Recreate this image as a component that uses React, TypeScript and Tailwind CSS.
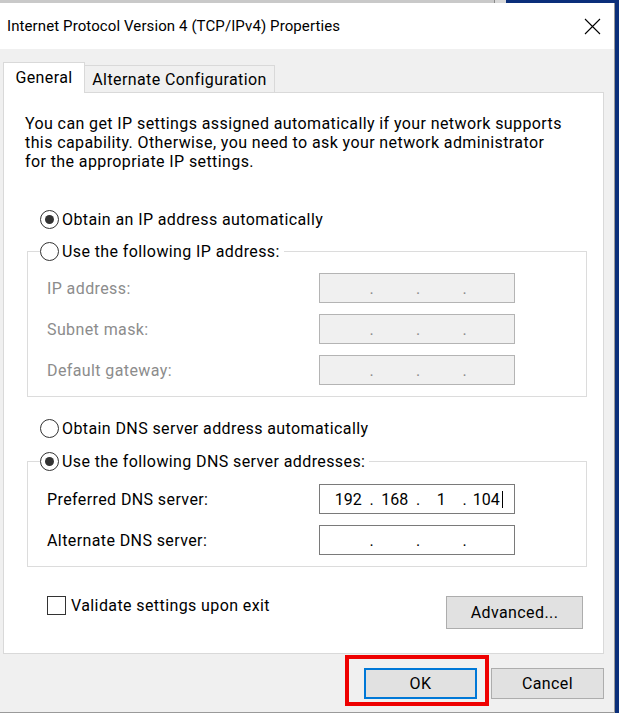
import React from 'react'

const font = "font-['Roboto',sans-serif]"

function Radio({ checked }: { checked?: boolean }) {
  return (
    <span className="flex h-[19px] w-[19px] shrink-0 items-center justify-center rounded-full border border-[#333333] bg-white">
      {checked && <span className="h-[9px] w-[9px] rounded-full bg-[#333333]" />}
    </span>
  )
}

function RadioRow({ label, checked }: { label: string; checked?: boolean }) {
  return (
    <div className="flex h-[20px] items-center gap-[3px] text-black">
      <Radio checked={checked} />
      <span className="whitespace-nowrap">{label}</span>
    </div>
  )
}

function IpField({ parts, disabled, caret }: { parts: string[]; disabled?: boolean; caret?: boolean }) {
  return (
    <div
      className={`flex h-[30px] w-[196px] items-center border pl-[8px] tracking-normal ${
        disabled ? 'border-[#b4b4b4] bg-[#f0f0f0] text-[#8c8c8c]' : 'border-[#7a7a7a] bg-white text-black'
      }`}
    >
      {parts.map((p, i) => (
        <React.Fragment key={i}>
          {i > 0 && <span className="w-[6px] text-center">.</span>}
          <span className="flex w-[40.5px] items-center justify-center">
            {p}
            {caret && i === parts.length - 1 && <span className="ml-[2px] h-[17px] w-px bg-black" />}
          </span>
        </React.Fragment>
      ))}
    </div>
  )
}

function FieldRow({ label, parts, disabled, caret }: { label: string; parts: string[]; disabled?: boolean; caret?: boolean }) {
  return (
    <div className="flex h-[30px] items-center">
      <span className={`w-[291px] pl-[19px] ${disabled ? 'text-[#8c8c8c]' : 'text-black'}`}>{label}</span>
      <IpField parts={parts} disabled={disabled} caret={caret} />
    </div>
  )
}

const empty = ['', '', '', '']

export default function App() {
  return (
    <div className={`h-[713px] w-[619px] overflow-hidden bg-[#0b2f7a] text-[16px] leading-[19px] tracking-[0.4px] ${font}`}>
      {/* strip of the window behind */}
      <div className="flex h-[3px]">
        <div className="w-[494px] bg-[#c9c9c9]" />
        <div className="w-px bg-[#8a8a8a]" />
        <div className="w-[11px] bg-[#d8d8d8]" />
        <div className="flex-1 bg-[#0b2f7a]" />
      </div>

      <div className="flex h-[710px] w-[615px] flex-col border-r border-b border-[#9a9a9a] bg-[#f0f0f0]">
        {/* title bar */}
        <div className="flex h-[46px] items-center justify-between bg-white pl-[7px] pr-[13px]">
          <span className="text-[15px] tracking-[0.1px] text-black">Internet Protocol Version 4 (TCP/IPv4) Properties</span>
          <svg width="17" height="17" viewBox="0 0 17 17">
            <path d="M1 1 L16 16 M16 1 L1 16" stroke="#000" strokeWidth="1.1" />
          </svg>
        </div>

        {/* tabs */}
        <div className="mt-[13px] flex items-end pl-[3px]">
          <div className="relative z-10 -mb-px flex h-[31px] w-[82px] items-center justify-center border border-b-0 border-[#d9d9d9] bg-white pb-[2px] text-black">
            General
          </div>
          <div className="flex h-[27px] w-[190px] items-center justify-center border border-b-0 border-l-0 border-[#d9d9d9] bg-[#f0f0f0] text-black">
            Alternate Configuration
          </div>
        </div>

        {/* panel */}
        <div className="ml-[3px] flex h-[562px] w-[601px] flex-col border border-[#d9d9d9] bg-white">
          <p className="ml-[21px] mt-[21px] whitespace-nowrap text-black">
            You can get IP settings assigned automatically if your network supports
            <br />
            this capability. Otherwise, you need to ask your network administrator
            <br />
            for the appropriate IP settings.
          </p>

          <div className="ml-[36px] mt-[38px]">
            <RadioRow label="Obtain an IP address automatically" checked />
          </div>

          <fieldset className="ml-[23px] mt-[12px] w-[560px] border border-[#dcdcdc] pb-[11px]">
            <legend className="ml-[12px] pr-[4px]">
              <RadioRow label="Use the following IP address:" />
            </legend>
            <div className="flex flex-col gap-[11px] pt-[12px]">
              <FieldRow label="IP address:" parts={empty} disabled />
              <FieldRow label="Subnet mask:" parts={empty} disabled />
              <FieldRow label="Default gateway:" parts={empty} disabled />
            </div>
          </fieldset>

          <div className="ml-[36px] mt-[21px]">
            <RadioRow label="Obtain DNS server address automatically" />
          </div>

          <fieldset className="ml-[23px] mt-[13px] w-[560px] border border-[#dcdcdc] pb-[11px]">
            <legend className="ml-[12px] pr-[4px]">
              <RadioRow label="Use the following DNS server addresses:" checked />
            </legend>
            <div className="flex flex-col gap-[11px] pt-[13px]">
              <FieldRow label="Preferred DNS server:" parts={['192', '168', '1', '104']} caret />
              <FieldRow label="Alternate DNS server:" parts={empty} />
            </div>
          </fieldset>

          <div className="ml-[43px] mr-[20px] mt-[29px] flex items-start justify-between">
            <div className="flex h-[19px] items-center gap-[5px] text-black">
              <span className="h-[19px] w-[19px] border border-[#333333] bg-white" />
              <span>Validate settings upon exit</span>
            </div>
            <button className="h-[33px] w-[137px] border border-[#adadad] bg-[#e1e1e1] text-black">Advanced...</button>
          </div>
        </div>

        {/* dialog buttons */}
        <div className="mr-[10px] mt-[14px] flex justify-end gap-[14px]">
          <div className="relative">
            <button className="h-[31px] w-[113px] border-2 border-[#0078d7] bg-[#e1e1e1] text-black">OK</button>
            <div className="pointer-events-none absolute left-[-19px] top-[-13px] h-[51px] w-[144px] border-4 border-[#ee0000]" />
          </div>
          <button className="h-[31px] w-[113px] border border-[#adadad] bg-[#e1e1e1] text-black">Cancel</button>
        </div>
      </div>
    </div>
  )
}
